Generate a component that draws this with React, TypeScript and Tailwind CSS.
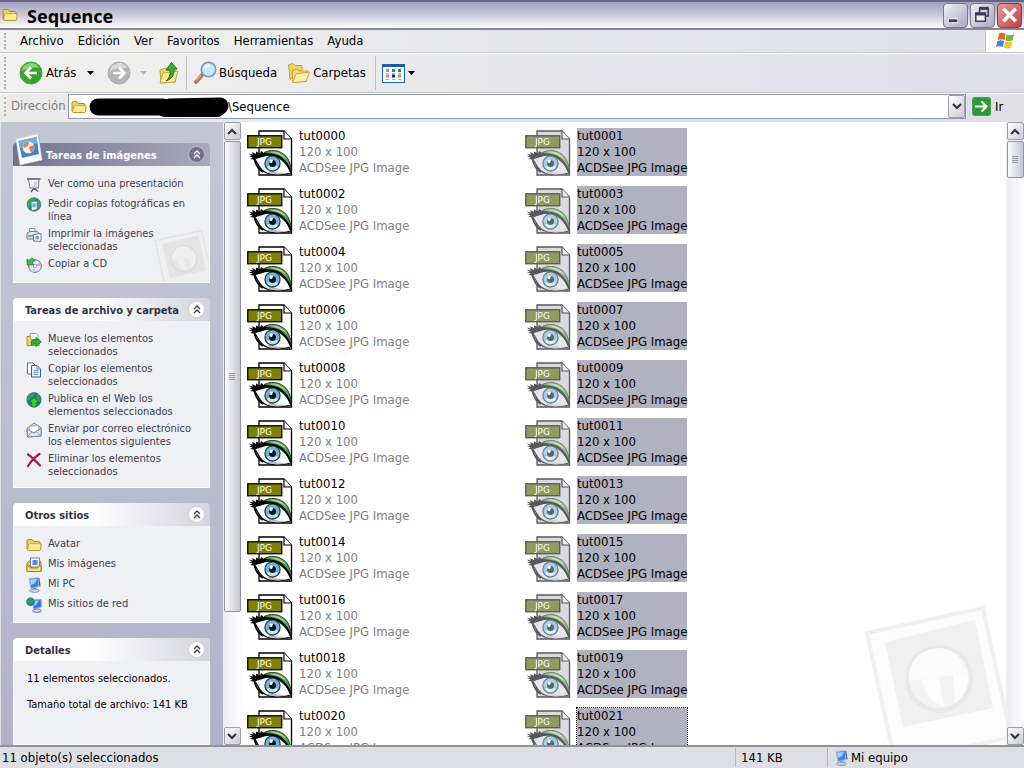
import type { ReactNode } from 'react';

const FileIcon = ({ selected }: { selected?: boolean }) => (
  <svg width="46" height="46" viewBox="0 0 46 46" className="shrink-0" aria-hidden="true">
    <path d="M12 1H37L44.500 9V45H12Z" fill={selected ? '#c6c7d2' : '#fff'} stroke="#000" strokeWidth="1.300" />
    <path d="M37 1V9H44.500" fill={selected ? '#e2e2ea' : '#fff'} stroke="#000" strokeWidth="1.200" />
    <path d="M6 27C14 25 25 23 33 28C38 31 42 38 44 43C34 45.500 21 46 15 40C11 36 10 31 6 27Z" fill={selected ? '#d8d9e1' : '#fff'} stroke="#000" strokeWidth="1.100" />
    <path d="M24 40C31 44 38 43 43 42.500C36 45 28 45 20 43Z" fill="#b9bcc4" />
    <circle cx="25.500" cy="33.500" r="7.600" fill="#73b4d9" stroke="#173a52" strokeWidth="1.200" />
    <path d="M20 37A6.500 6.500 0 0 0 31 37L25.500 33.500Z" fill="#c5e6f4" />
    <circle cx="25.500" cy="33.500" r="3.500" fill="#08131c" />
    <path d="M23 29.500L26 30L25 33L22.500 32.500Z" fill="#fff" />
    <path d="M17 22.500C27 17.500 37 22 41 29C43 33 44 37 44.500 41C39 33 31 25 17 22.500Z" fill="#4f9a46" stroke="#183218" strokeWidth=".9" />
    <path d="M22 22C30 20 37 24 40 30C35 25.500 29 23 22 22Z" fill="#a4d391" />
    <path d="M7 27C17 24 27 22.500 34 28C39 32 42 37 44 42" fill="none" stroke="#000" strokeWidth="2" />
    <path d="M1.500 23.500L6 24.500L5 22L9 24L9 21.500L13 23.500L14 21L17 23L20 23L22 25L14 27.500L7 29.500L3 29L6 27.500L2 26.500L5 25.700Z" fill="#000" />
    <path d="M7 28C9 36 12 40 16 42" fill="none" stroke="#000" strokeWidth="1.800" />
    <rect x="0.750" y="5.750" width="34" height="12" fill={selected ? '#566608' : '#7f8000'} stroke="#000" strokeWidth="1.300" />
    <text x="17.500" y="15" textAnchor="middle" fontSize="9" fill="#fff" className="font-['DejaVu_Sans',sans-serif]">JPG</text>
  </svg>
);

const Folder = ({ className = 'size-4' }: { className?: string }) => (
  <svg viewBox="0 0 16 16" className={`shrink-0 ${className}`} aria-hidden="true">
    <path d="M1 4Q1 2.500 2.500 2.500H6L7.500 4.500H13Q14 4.500 14 6V13H2.500Q1 13 1 11.500Z" fill="#f2cf5a" stroke="#b48d22" />
    <path d="M3.500 7H14.500Q15.500 7 15.200 8L14.500 12.500Q14.300 13.500 13 13.500H2.500Q1.400 13.500 1.600 12.300L2.300 8Q2.500 7 3.500 7Z" fill="#fbe88f" stroke="#bd962c" />
    <path d="M3.500 8H14" stroke="#fffbd5" />
  </svg>
);

const Monitor = () => (
  <svg viewBox="0 0 16 16" className="size-4 shrink-0" aria-hidden="true">
    <path d="M3 1.500L12 .7L13 9.500L5 11.500Z" fill="#3d83dd" stroke="#a9bad6" />
    <path d="M4 2.500L11 2L9 6L5 8Z" fill="#a5d4fa" />
    <path d="M12.800 1L14 9.300" stroke="#53699c" strokeWidth="1.300" />
    <path d="M7 11L10 10.500L10.500 13H7Z" fill="#8b98bb" />
    <ellipse cx="8.500" cy="13.700" rx="5" ry="1.700" fill="#c9d3e6" stroke="#7485ad" strokeWidth=".8" />
  </svg>
);

const NetworkIcon = () => (
  <svg viewBox="0 0 16 16" className="size-4 shrink-0" aria-hidden="true">
    <path d="M6 3L15 2.500L15.500 10L8 12Z" fill="#2f78d8" stroke="#8fa9d2" />
    <path d="M8 4L13 3.500L10 8L8 9Z" fill="#9fd2fa" />
    <circle cx="4.500" cy="4.800" r="4.300" fill="#2874c9" />
    <path d="M1 3Q4 0 6 1L8 4L6 6L3 7Q0 6 1 3Z" fill="#32a13c" />
    <ellipse cx="11" cy="13.700" rx="4.500" ry="1.700" fill="#d5dae6" stroke="#4e6ca5" strokeWidth=".9" />
  </svg>
);

const PicturesFolder = () => (
  <svg viewBox="0 0 16 16" className="size-4 shrink-0" aria-hidden="true">
    <path d="M1 6L3 4H14L15 6V14H1Z" fill="#edc557" stroke="#a97c1d" />
    <rect x="4.500" y="1" width="9" height="9" fill="#fff" stroke="#847a80" />
    <rect x="6.500" y="3" width="5" height="5" fill="#4d8ed8" />
    <path d="M1 9H4V11H12V9H15V14.500H1Z" fill="#fbe28a" stroke="#a97c1d" />
  </svg>
);

const Presentation = () => (
  <svg viewBox="0 0 16 16" className="size-4 shrink-0" aria-hidden="true">
    <path d="M8 11L5 15M8 11L12 14.500M8 10V13" stroke="#585866" strokeWidth="1.300" />
    <path d="M2.500 2.500H13L12.500 11H4Z" fill="#f5f6fb" stroke="#77798a" />
    <path d="M9 4H12L11 10H6Z" fill="#d4d7e6" />
    <path d="M1 2H14.500" stroke="#7c7d8c" strokeWidth="2" />
  </svg>
);

const GlobePhoto = () => (
  <svg viewBox="0 0 16 16" className="size-4 shrink-0" aria-hidden="true">
    <circle cx="8" cy="7.500" r="6.800" fill="#2d7aa8" stroke="#2a6170" strokeWidth=".6" />
    <path d="M2 3Q6 0 9 1L7 5L4 8L3 12Q0 8 2 3ZM11 2Q15 5 14 10L10 13L9 9Z" fill="#39a557" />
    <path d="M5 5L11 4V12.500L5.500 13.500Z" fill="#fff" stroke="#5b7b92" strokeWidth=".8" />
    <rect x="6.300" y="6.300" width="3.400" height="4" fill="#5ab3dd" />
  </svg>
);

const Printer = () => (
  <svg viewBox="0 0 16 16" className="size-4 shrink-0" aria-hidden="true">
    <path d="M3.500 6V1.500H9V6" fill="#fff" stroke="#8992a4" />
    <path d="M1 6L4 4.500H11L13 6V12H1Z" fill="#dfe3ec" stroke="#6e7b91" />
    <path d="M2 9H8" stroke="#489e64" strokeWidth="1.500" />
    <path d="M7.500 7.500L15 6.500V14.500L7.500 14Z" fill="#fff" stroke="#5b7898" />
    <path d="M9.500 9H13V12.500H9.500Z" fill="#68a6d8" />
  </svg>
);

const CopyCd = () => (
  <svg viewBox="0 0 16 16" className="size-4 shrink-0" aria-hidden="true">
    <circle cx="9" cy="9" r="6.300" fill="#ececf6" stroke="#62657a" />
    <path d="M9 9L14 5A6 6 0 0 1 15 9Z" fill="#c5a9de" />
    <path d="M9 9L5 14A6 6 0 0 0 9 15Z" fill="#b9dae9" />
    <circle cx="9" cy="9" r="1.800" fill="#fff" stroke="#85889c" strokeWidth=".8" />
    <path d="M1 8V2L3 3.500L6 .8L9 3.500L6 6L8 8Z" fill="#44b944" stroke="#227a2a" strokeWidth=".7" />
  </svg>
);

const MoveIcon = () => (
  <svg viewBox="0 0 16 16" className="size-4 shrink-0" aria-hidden="true">
    <path d="M4 5V1.500H10L12 3.500V8H4Z" fill="#fff" stroke="#9098a6" />
    <path d="M1 4.500H4L5 7.500H13V13.500H1Z" fill="#f2d46c" stroke="#b48d22" />
    <path d="M5 9.500Q6 7.500 10 8V5.500L15.300 9.800L10 14.500V12Q7 11.500 5.500 13.500Z" fill="#31b236" stroke="#14721d" strokeWidth=".8" />
  </svg>
);

const CopyIcon = () => (
  <svg viewBox="0 0 16 16" className="size-4 shrink-0" aria-hidden="true">
    <path d="M1.500 1H7L9 3V12H1.500Z" fill="#fff" stroke="#54769a" />
    <path d="M5.500 3.500H11L14.500 7V15H5.500Z" fill="#e9f3fd" stroke="#36618f" />
    <path d="M11 3.500V7H14.500M7.500 8.500H12.500M7.500 10.500H12.500M7.500 12.500H12.500" fill="none" stroke="#5e90c2" />
  </svg>
);

const PublishIcon = () => (
  <svg viewBox="0 0 16 16" className="size-4 shrink-0" aria-hidden="true">
    <circle cx="8" cy="7.800" r="7.200" fill="#276fae" stroke="#29595b" strokeWidth=".6" />
    <path d="M2 3Q5 0 9 1L8 4L4 7L2 10Q0 6 2 3ZM11 1Q16 5 14 10L10 7Z" fill="#35a04a" />
    <path d="M8 5.500L13 10.500H10.300V15H5.700V10.500H3Z" fill="#3dcc38" stroke="#127c20" strokeWidth=".8" />
  </svg>
);

const MailIcon = () => (
  <svg viewBox="0 0 16 16" className="size-4 shrink-0" aria-hidden="true">
    <path d="M1 6.500L8 1L15 5.500V14L1.500 15Z" fill="#c6d9ef" stroke="#6c87ad" />
    <path d="M3.500 4.500L12.500 3.500V9L8 11L3.500 9Z" fill="#fff" stroke="#c7a85a" strokeWidth=".8" />
    <path d="M1 7L8 11L15 6V14L1.500 15Z" fill="#dbe9f8" stroke="#6c87ad" />
    <path d="M1.500 14.500L6 10M15 14L10 9.500" stroke="#88a0c2" />
  </svg>
);

const DeleteIcon = () => (
  <svg viewBox="0 0 16 16" className="size-4 shrink-0" aria-hidden="true">
    <path d="M2 2.500Q6 5 14 13.500M13.500 2Q7 6 2 14" fill="none" stroke="#a81c40" strokeWidth="2.200" strokeLinecap="round" />
  </svg>
);

const Photo = () => (
  <svg viewBox="0 0 30 34" className="absolute -top-[10px] left-[1px] h-[34px] w-[30px]" aria-hidden="true">
    <path d="M3 7L25 2L29 28L7 33Z" fill="#5f6076" opacity=".5" />
    <path d="M2 6L24 1L28 27L6 32Z" fill="#fff" stroke="#cfd4e2" strokeWidth=".7" />
    <path d="M4.500 8L22.500 4L25 21L8 25Z" fill="#3a86c4" />
    <path d="M4.500 8L22.500 4L23.500 10L6 15Z" fill="#69b1e0" />
    <circle cx="14.500" cy="14.500" r="6" fill="#f4e9e2" />
    <path d="M9 12Q12 8 15 9L14 13L10 15ZM15 14L20 12Q21 17 17 20Z" fill="#d98255" />
  </svg>
);

const PhotoWatermark = ({ className }: { className: string }) => (
  <svg viewBox="0 0 144 142" className={`pointer-events-none absolute ${className}`} aria-hidden="true">
    <path d="M5 30L121 5L149 134L33 160Z" fill="#fcfcfd" stroke="#f0f0f1" strokeWidth="4" />
    <path d="M23 39L113 17L131 105L41 124Z" fill="#f0f0f1" />
    <circle cx="77" cy="76" r="34" fill="#e8e8ea" />
    <circle cx="77" cy="75" r="30" fill="#f3f3f4" />
    <path d="M77 74L47 78Q46 49 75 45Q90 45 98 56L106 70Z" fill="#fbfbfc" />
    <path d="M60 77L77 74L82 104Q63 97 60 77ZM91 72L106 70Q108 90 93 100Z" fill="#fdfdfd" />
  </svg>
);

const Chevrons = () => (
  <svg viewBox="0 0 8 9" className="h-[9px] w-2" fill="none" stroke="currentColor" strokeWidth="1.300" aria-hidden="true">
    <path d="M1 4L4 1L7 4M1 8L4 5L7 8" />
  </svg>
);

const Caret = ({ className = 'text-black' }: { className?: string }) => (
  <svg viewBox="0 0 7 4" className={`h-1 w-[7px] shrink-0 ${className}`} aria-hidden="true"><path d="M0 0H7L3.500 4Z" fill="currentColor" /></svg>
);

const Round = ({ back }: { back?: boolean }) => (
  <svg viewBox="0 0 24 24" className="size-6 shrink-0" aria-hidden="true">
    <circle cx="12" cy="12" r="11" fill={back ? '#35a52e' : '#b5b5b5'} stroke={back ? '#4c9a49' : '#adadad'} />
    <path d="M3 10A9 9 0 0 1 20 7Q12 5 3 10Z" fill={back ? '#8bd57c' : '#dadada'} />
    <path d={back ? 'M18 12H7M12 6.500L6.500 12L12 17.500' : 'M6 12H17M12 6.500L17.500 12L12 17.500'} fill="none" stroke="#fff" strokeWidth="2.700" />
  </svg>
);

const Grip = () => <span className="my-[3px] w-[3px] self-stretch border-l-2 border-dotted border-[#b3b4bb]" />;

const ScrollButton = ({ down, className = 'h-[18px]' }: { down?: boolean; className?: string }) => (
  <button
    type="button"
    aria-label={down ? 'Bajar' : 'Subir'}
    className={`flex w-[17px] shrink-0 items-center justify-center rounded-xs border border-[#9c9eae] bg-linear-to-br from-white to-[#c9cad8] ${className}`}
  >
    <svg viewBox="0 0 10 7" className="h-[7px] w-[10px]" fill="none" stroke="#34353f" strokeWidth="2.200" aria-hidden="true">
      <path d={down ? 'M1 1L5 5L9 1' : 'M1 6L5 2L9 6'} />
    </svg>
  </button>
);

const ScrollBar = ({ thumb }: { thumb: string }) => (
  <div className="flex w-[18px] shrink-0 flex-col items-center bg-linear-to-r from-[#ececf4] to-[#fcfcff]">
    <ScrollButton />
    <div className="flex min-h-0 w-full flex-1 flex-col items-center pt-px">
      <div className={`flex w-[17px] flex-col items-center justify-center gap-px rounded-xs border border-[#9092a4] bg-linear-to-r from-[#fafafd] to-[#c5c6d3] ${thumb}`}>
        {[0, 1, 2, 3].map((n) => <span key={n} className="h-px w-[6px] bg-[#9698a8]" />)}
      </div>
    </div>
    <ScrollButton down />
  </div>
);

type PanelProps = { title: string; main?: boolean; grow?: boolean; body: string; children: ReactNode };
const Panel = ({ title, main, grow, body, children }: PanelProps) => (
  <section className={grow ? 'flex min-h-0 flex-1 flex-col' : 'shrink-0'}>
    <h2 className={`relative flex h-[23px] items-center justify-between rounded-t-sm pr-[6px] text-[11px] font-bold ${main ? 'bg-linear-to-r from-[#74728f] to-[#a9aabf] pl-[33px] text-white' : 'bg-linear-to-r from-white from-40% to-[#d2d3de] pl-3 text-[#33333f]'}`}>
      {main && <Photo />}
      <span className="pt-1 whitespace-nowrap">{title}</span>
      <button type="button" aria-label={`Contraer ${title}`} className={`flex size-[15px] shrink-0 items-center justify-center rounded-full ${main ? 'bg-[#71718e] text-white ring-1 ring-[#b6b7cc]' : 'bg-white text-[#3c3d50] ring-1 ring-[#cfd0dc]'}`}>
        <Chevrons />
      </button>
    </h2>
    <div className={`relative overflow-hidden border border-t-0 border-white bg-[#eff0f4] ${body}`}>{children}</div>
  </section>
);

type Task = { icon: ReactNode; label: string };
const TaskList = ({ items }: { items: Task[] }) => (
  <ul className="relative flex flex-col gap-1 pl-3 text-[11px] leading-[13px] text-[#3c3c4c]">
    {items.map(({ icon, label }) => (
      <li key={label}>
        <a href="#" className="flex items-start gap-[6px]">
          {icon}
          <span className="whitespace-pre-line">{label}</span>
        </a>
      </li>
    ))}
  </ul>
);

const imageTasks: Task[] = [
  { icon: <Presentation />, label: 'Ver como una presentación' },
  { icon: <GlobePhoto />, label: 'Pedir copias fotográficas en\nlínea' },
  { icon: <Printer />, label: 'Imprimir la imágenes\nseleccionadas' },
  { icon: <CopyCd />, label: 'Copiar a CD' },
];
const fileTasks: Task[] = [
  { icon: <MoveIcon />, label: 'Mueve los elementos\nseleccionados' },
  { icon: <CopyIcon />, label: 'Copiar los elementos\nseleccionados' },
  { icon: <PublishIcon />, label: 'Publica en el Web los\nelementos seleccionados' },
  { icon: <MailIcon />, label: 'Enviar por correo electrónico\nlos elementos siguientes' },
  { icon: <DeleteIcon />, label: 'Eliminar los elementos\nseleccionados' },
];
const places: Task[] = [
  { icon: <Folder />, label: 'Avatar' },
  { icon: <PicturesFolder />, label: 'Mis imágenes' },
  { icon: <Monitor />, label: 'Mi PC' },
  { icon: <NetworkIcon />, label: 'Mis sitios de red' },
];

const menus = ['Archivo', 'Edición', 'Ver', 'Favoritos', 'Herramientas', 'Ayuda'];
const files = Array.from({ length: 22 }, (_, i) => `tut${String(i).padStart(4, '0')}`);

const windowButton = 'flex size-[25px] items-center justify-center rounded-sm border';

export default function App() {
  return (
    <div className="flex h-screen flex-col overflow-hidden bg-[#dfe0e7] font-['DejaVu_Sans_Condensed','DejaVu_Sans',sans-serif] text-[13px] text-black">
      <header className="flex h-[30px] shrink-0 items-center border-t-2 border-b-2 border-t-[#69668a] border-b-[#85869a] bg-linear-to-b from-[#a3a2be] via-[#c9c9d9] to-white pr-[2px] pl-[2px]">
        <Folder />
        <h1 className="ml-[9px] flex-1 pt-px font-['Noto_Sans',sans-serif] text-[18px] leading-6 font-bold">Sequence</h1>
        <div className="flex gap-[2px]">
          <button type="button" aria-label="Minimizar" className={`${windowButton} border-[#77778f] bg-linear-to-br from-[#f0f0f6] to-[#a9a9c2]`}>
            <svg viewBox="0 0 24 24" className="size-6" aria-hidden="true"><path d="M4.500 18H14.500" stroke="#fff" strokeWidth="5" /><path d="M5 18H14" stroke="#3a3a55" strokeWidth="3" /></svg>
          </button>
          <button type="button" aria-label="Restaurar" className={`${windowButton} border-[#77778f] bg-linear-to-br from-[#f0f0f6] to-[#a9a9c2]`}>
            <svg viewBox="0 0 24 24" className="size-6" fill="none" stroke="#3a3a55" aria-hidden="true">
              <path d="M9 10V5.500H18V13H15" strokeWidth="1.500" /><path d="M8.500 5H18.500" strokeWidth="3" />
              <rect x="5" y="10" width="10" height="8.500" fill="#eeeef4" strokeWidth="1.500" /><path d="M4.500 11H15.500" strokeWidth="3" />
            </svg>
          </button>
          <button type="button" aria-label="Cerrar" className={`${windowButton} border-[#8d3a45] bg-linear-to-br from-[#e89a96] to-[#c03c48]`}>
            <svg viewBox="0 0 24 24" className="size-6" aria-hidden="true"><path d="M5.500 5.500L18.500 18.500M18.500 5.500L5.500 18.500" stroke="#fff" strokeWidth="3.600" /></svg>
          </button>
        </div>
      </header>

      <nav className="flex h-[23px] shrink-0 border-b border-[#c5c6c8] bg-linear-to-r from-[#f1f1ee] to-[#dedfe9] pl-1">
        <Grip />
        <div className="flex flex-1 items-center pl-[6px]">
          {menus.map((m) => <button key={m} type="button" className="px-[7px]">{m}</button>)}
        </div>
        <div className="flex w-[39px] items-center justify-center border-l border-[#c5c6c8] bg-white">
          <svg viewBox="0 0 20 18" className="h-[18px] w-5" aria-hidden="true">
            <path d="M4 1.500Q7 0 10.500 2L9.500 8Q6 6.500 2.800 8Z" fill="#e5632b" />
            <path d="M11.500 2.500Q15 4 19 2.300L17.600 8.500Q14 10 10.400 8.500Z" fill="#75b63d" />
            <path d="M2.500 9Q6 7.500 9.200 9L8 15Q4.500 13.500 1 15Z" fill="#4787cf" />
            <path d="M10.200 9.500Q14 11 17.400 9.500L16 15.500Q12.500 17.500 9 15.500Z" fill="#f2c32e" />
          </svg>
        </div>
      </nav>

      <div className="flex h-10 shrink-0 items-center border-t border-b border-t-white border-b-[#c5c6c8] bg-linear-to-r from-[#f1f1ee] to-[#dedfe9] pl-1">
        <Grip />
        <button type="button" className="ml-3 flex w-[75px] items-center gap-[3px]"><Round back /><span className="flex-1 text-left">Atrás</span><Caret /></button>
        <button type="button" aria-label="Adelante" className="ml-[13px] flex items-center gap-[9px]"><Round /><Caret className="text-[#b5b5b5]" /></button>
        <button type="button" aria-label="Arriba" className="ml-[11px]">
          <svg viewBox="0 0 22 24" className="h-6 w-[22px]" aria-hidden="true">
            <path d="M2 9L8 7L10 9H18L17 21L3 22Z" fill="#f3d365" stroke="#c9a136" />
            <path d="M5 12L20 10L17 21L2 22Z" fill="#fcec9a" stroke="#c9a136" />
            <path d="M8 20Q13 16 12 9H8L13.500 1.500L19 8H16Q17 17 8 20Z" fill="#39b034" stroke="#1f7622" />
          </svg>
        </button>
        <span className="mx-[6px] h-[34px] w-px bg-[#bdbec2]" />
        <button type="button" className="flex items-center gap-[2px]">
          <svg viewBox="0 0 24 24" className="size-6" aria-hidden="true">
            <path d="M9 14L3 21" stroke="#c36f4d" strokeWidth="4" strokeLinecap="round" /><path d="M8 14L3 19.500" stroke="#eca987" strokeWidth="1.300" />
            <circle cx="15.500" cy="8.500" r="7.200" fill="#c8e8fb" stroke="#8099bd" strokeWidth="1.700" />
            <path d="M10.500 8Q12 3.500 17 3.500Q15 7 10.500 8Z" fill="#fff" />
          </svg>
          Búsqueda
        </button>
        <button type="button" className="ml-[10px] flex items-center gap-[2px]">
          <svg viewBox="0 0 24 24" className="size-6" aria-hidden="true">
            <path d="M1.500 4L6 2.500L8 4.500H15V15L3 18Z" fill="#f2d069" stroke="#c9a03c" />
            <path d="M5 10L10 8L12 10H21L19 20L6 21.500Z" fill="#f7dc7e" stroke="#c9a03c" />
            <path d="M9 13L22.500 11L19 20.500L5.500 21.500Z" fill="#fdf0a6" stroke="#c9a03c" />
          </svg>
          Carpetas
        </button>
        <span className="mr-[6px] ml-[9px] h-[34px] w-px bg-[#bdbec2]" />
        <button type="button" aria-label="Vistas" className="flex items-center gap-[3px]">
          <svg viewBox="0 0 23 19" className="h-[19px] w-[23px]" aria-hidden="true">
            <rect x=".5" y=".5" width="22" height="18" fill="#f8fbff" stroke="#1d66a8" /><path d="M0 1.500H23" stroke="#1a5aa6" strokeWidth="3" />
            <path d="M4 6.500H7" stroke="#8c96a4" strokeWidth="3" /><path d="M10 6.500H13" stroke="#40789f" strokeWidth="3" /><path d="M16 6.500H19" stroke="#308341" strokeWidth="3" />
            <path d="M4 12H7" stroke="#d88d70" strokeWidth="3" /><path d="M10 12H13" stroke="#252d58" strokeWidth="3" /><path d="M16 12H19" stroke="#a3a143" strokeWidth="3" />
            <path d="M4 9.500H7M10 9.500H13M16 9.500H19M4 15.500H7M10 15.500H13M16 15.500H19" stroke="#a9b6c4" />
          </svg>
          <Caret />
        </button>
      </div>

      <div className="flex h-[29px] shrink-0 border-t border-white bg-linear-to-r from-[#ebecea] to-[#dedfe9] pb-[3px] pl-1">
        <Grip />
        <label htmlFor="address" className="w-[61px] pt-[2px] pl-1 text-[#808080]">Dirección</label>
        <div className="flex flex-1 items-center border border-[#8f98a6] bg-white pl-[2px]">
          <Folder />
          <svg viewBox="0 0 140 20" className="ml-[2px] h-5 w-[140px] shrink-0" aria-hidden="true">
            <path d="M9 10H74M80 10L131 9" stroke="#000" strokeWidth="17" strokeLinecap="round" /><path d="M76 12H128" stroke="#000" strokeWidth="16" strokeLinecap="round" />
          </svg>
          <input id="address" type="text" defaultValue="\Sequence" className="-ml-px min-w-0 flex-1 bg-transparent outline-none" />
          <ScrollButton down className="h-[23px]" />
        </div>
        <button type="button" className="ml-[6px] flex w-[52px] items-center gap-1">
          <svg viewBox="0 0 19 19" className="size-[19px]" aria-hidden="true"><rect x=".5" y=".5" width="18" height="18" rx="2" fill="#2e9a35" stroke="#4d9f58" /><path d="M3 9.500H14M9.500 4.500L14.500 9.500L9.500 14.500" fill="none" stroke="#fff" strokeWidth="2.200" /></svg>
          Ir
        </button>
      </div>

      <div className="flex min-h-0 flex-1">
        <aside className="flex w-[223px] shrink-0 flex-col gap-[15px] overflow-hidden border-l border-[#e0e2ea] bg-linear-to-b from-[#c3c7d4] to-[#b2b3ca] pt-[21px] pr-[13px] pl-3">
          <Panel title="Tareas de imágenes" main body="pt-[11px] pb-[9px]">
            <PhotoWatermark className="-right-[2px] -bottom-1 h-[58px] w-[58px] brightness-95" />
            <TaskList items={imageTasks} />
          </Panel>
          <Panel title="Tareas de archivo y carpeta" body="pt-[11px] pb-[9px]"><TaskList items={fileTasks} /></Panel>
          <Panel title="Otros sitios" body="pt-[11px] pb-[9px]"><TaskList items={places} /></Panel>
          <Panel title="Detalles" grow body="flex flex-1 flex-col gap-[13px] pt-[11px] pl-[13px] text-[11px] leading-[13px]">
            <p>11 elementos seleccionados.</p>
            <p>Tamaño total de archivo: 141 KB</p>
          </Panel>
        </aside>
        <ScrollBar thumb="h-[80.4%]" />
        <main className="relative min-w-0 flex-1 overflow-hidden bg-white">
          <PhotoWatermark className="right-0 bottom-0 h-[142px] w-[144px]" />
          <ul className="relative grid grid-cols-[278px_278px] gap-y-[10px] pt-[6px] pl-[6px] text-[13px] leading-4">
            {files.map((name, i) => {
              const selected = i % 2 === 1;
              return (
                <li key={name} className="flex h-12 items-start gap-[6px]">
                  <span className={selected ? 'pt-[2px] opacity-65' : 'pt-[2px]'}><FileIcon selected={selected} /></span>
                  <div className={`whitespace-nowrap ${selected ? 'bg-[#b1b2bf]' : 'text-[#808080]'} ${i === 21 ? 'outline-1 outline-black outline-dotted' : ''}`}>
                    <p className="text-black">{name}</p>
                    <p>120 x 100</p>
                    <p>ACDSee JPG Image</p>
                  </div>
                </li>
              );
            })}
          </ul>
        </main>
        <ScrollBar thumb="h-[37px]" />
      </div>

      <footer className="flex h-[23px] shrink-0 items-center border-t-2 border-[#90919a] bg-[#dedfe5]">
        <span className="flex-1 pl-[2px]">11 objeto(s) seleccionados</span>
        <span className="w-[92px] border-l border-[#b5b6c0] pl-[5px]">141 KB</span>
        <span className="flex w-[197px] items-center gap-[2px] border-l border-[#b5b6c0] pl-[5px]"><Monitor />Mi equipo</span>
      </footer>
    </div>
  );
}
